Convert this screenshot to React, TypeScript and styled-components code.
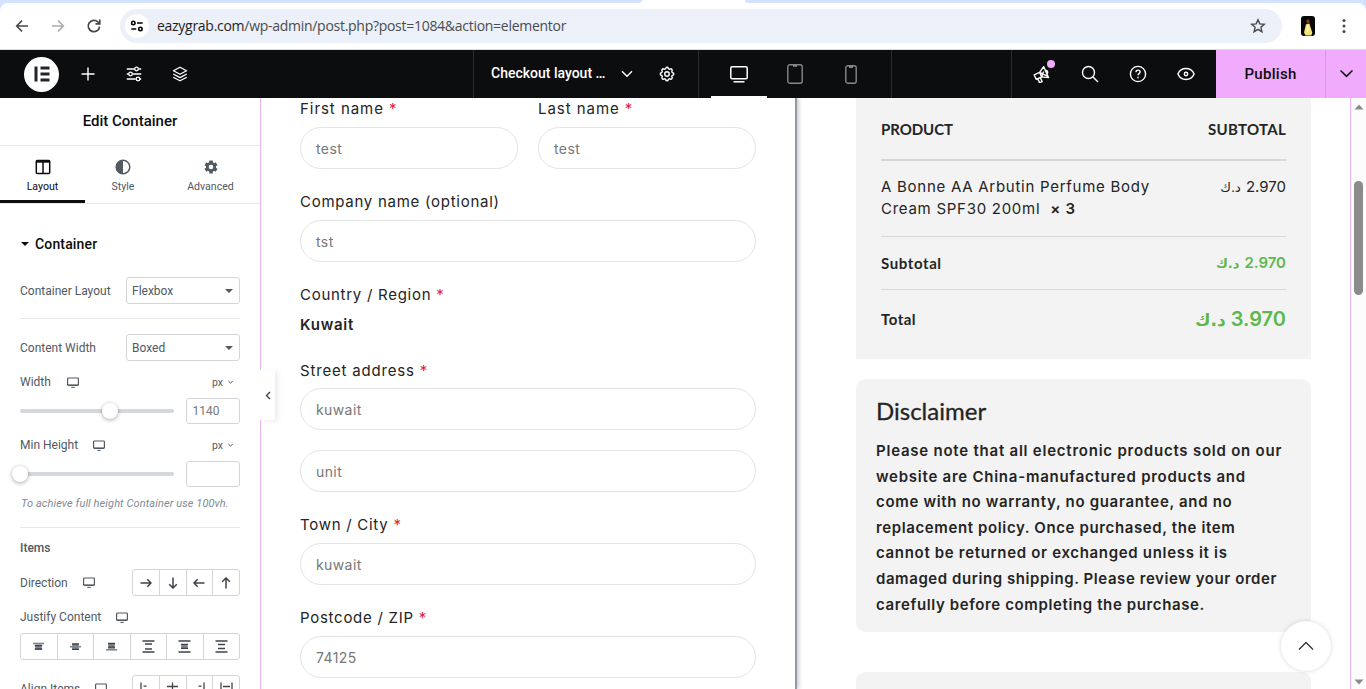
import React from "react";
import styled, { createGlobalStyle, css } from "styled-components";

const GlobalStyle = createGlobalStyle`
  *, *::before, *::after { box-sizing: border-box; }
  body { margin: 0; font-family: Roboto, "Liberation Sans", sans-serif; background: #fff; }
  svg { display: block; flex: none; }
`;

const Screen = styled.div`
  width: 100%;
  height: 689px;
  display: flex;
  flex-direction: column;
  overflow: hidden;
`;

/* ---------- browser chrome ---------- */

const TabStrip = styled.div`
  height: 3px;
  flex: none;
  display: flex;
  justify-content: space-between;
  background: #fff;
`;

const StripSegment = styled.div<{ $width: number; $side: "left" | "right" }>`
  width: ${p => p.$width}px;
  background: #d3e3fd;
  border-radius: ${p => (p.$side === "left" ? "0 0 8px 0" : "0 0 0 8px")};
`;

const BrowserBarBack = styled.div`
  flex: none;
  background: linear-gradient(#d3e3fd 10px, #fff 10px);
`;

const BrowserBar = styled.div`
  height: 47px;
  display: flex;
  align-items: center;
  padding: 0 14px 1px;
  background: #fff;
  border-radius: 8px 8px 0 0;
  border-bottom: 1px solid #dcdddc;
`;

const NavIcon = styled.div<{ $dim?: boolean }>`
  width: 16px;
  margin-right: 20px;
  color: ${p => (p.$dim ? "#a9aaab" : "#46484a")};
`;

const AddressBar = styled.div`
  flex: 1;
  height: 34px;
  margin-left: -2px;
  padding: 0 16px 0 5px;
  display: flex;
  align-items: center;
  border-radius: 17px;
  background: #ecf0f9;
`;

const SiteInfo = styled.div`
  width: 24px;
  height: 24px;
  margin-right: 8px;
  border-radius: 50%;
  background: #fff;
  display: grid;
  place-items: center;
`;

const Url = styled.div`
  flex: 1;
  font: 14px "Open Sans", "Noto Sans", sans-serif;
  letter-spacing: -0.28px;
  color: #4a4c50;
  white-space: nowrap;
`;

const UrlHost = styled.span`
  color: #1f1f1f;
`;

const ProfileSlot = styled.div`
  margin: 0 21px 0 19px;
`;

/* ---------- editor top bar ---------- */

const TopBar = styled.header`
  height: 48px;
  flex: none;
  display: flex;
  background: #0c0d0e;
  color: #fff;
`;

const BarGroup = styled.div<{ $width?: number; $divided?: boolean; $pad?: string }>`
  display: flex;
  align-items: center;
  ${p => (p.$width ? css`width: ${p.$width}px; flex: none;` : css`flex: 1;`)}
  padding: ${p => p.$pad || "0"};
  ${p => p.$divided && css`border-left: 1px solid #2a2c2e;`}
`;

const Logo = styled.div`
  width: 35px;
  height: 35px;
  margin-right: 6px;
  border-radius: 50%;
  background: #fff;
  display: grid;
  place-items: center;
`;

const BarButton = styled.div<{ $size?: number; $dim?: boolean }>`
  position: relative;
  width: ${p => p.$size || 46}px;
  height: 48px;
  display: grid;
  place-items: center;
  color: ${p => (p.$dim ? "#85878a" : "#fff")};
`;

const DeviceButton = styled(BarButton)<{ $active?: boolean }>`
  border-bottom: 2px solid ${p => (p.$active ? "#fff" : "transparent")};
  padding-top: 2px;
`;

const Notice = styled.span`
  position: absolute;
  left: 29px;
  top: 10px;
  width: 8px;
  height: 8px;
  border-radius: 50%;
  background: #f0abfc;
`;

const DocumentTitle = styled.div`
  width: 127px;
  font-weight: 500;
  font-size: 14px;
  line-height: 20px;
  padding-bottom: 2px;
  white-space: nowrap;
`;

const Publish = styled.div`
  width: 109px;
  display: grid;
  place-items: center;
  background: #f0abfc;
  color: #0c0d0e;
  font-weight: 500;
  font-size: 15px;
  letter-spacing: 0.3px;
`;

const PublishMore = styled.div`
  width: 41px;
  display: grid;
  place-items: center;
  background: #f0abfc;
  border-left: 1px solid #e48df5;
  color: #0c0d0e;
`;

/* ---------- side panel ---------- */

const Workspace = styled.div`
  flex: 1;
  min-height: 0;
  display: flex;
  position: relative;
`;

const Panel = styled.aside`
  width: 260px;
  flex: none;
  overflow: hidden;
  background: #fff;
  color: #515962;
  font-size: 12px;
`;

const PanelTitle = styled.div`
  height: 48px;
  padding-bottom: 1px;
  border-bottom: 1px solid #e6e8ea;
  display: grid;
  place-items: center;
  font-weight: 500;
  font-size: 15px;
  color: #0c0d0e;
`;

const Tabs = styled.div`
  height: 58px;
  display: flex;
  border-bottom: 1px solid #e6e8ea;
`;

const Tab = styled.div<{ $width: number; $active?: boolean }>`
  width: ${p => p.$width}px;
  height: 57px;
  padding-top: 13px;
  display: flex;
  flex-direction: column;
  align-items: center;
  gap: 4px;
  font-size: 10.6px;
  line-height: 15px;
  color: ${p => (p.$active ? "#0c0d0e" : "#515962")};
  border-bottom: 3px solid ${p => (p.$active ? "#0c0d0e" : "transparent")};
`;

const Controls = styled.div`
  padding: 0 20px;
`;

const SectionTitle = styled.div`
  height: 73px;
  padding: 6px 0 0 1px;
  display: flex;
  align-items: center;
  gap: 6px;
  font-weight: 500;
  font-size: 14px;
  letter-spacing: 0.15px;
  color: #0c0d0e;
`;

const Field = styled.div<{ $height: number; $top?: number }>`
  height: ${p => p.$height}px;
  margin-top: ${p => p.$top || 0}px;
  display: flex;
  align-items: center;
`;

const Label = styled.span<{ $gap?: number }>`
  margin-right: ${p => p.$gap || 0}px;
  white-space: nowrap;
`;

const Spacer = styled.span`
  flex: 1;
`;

const Select = styled.div`
  width: 114px;
  height: 27px;
  margin-left: auto;
  padding: 0 6px 0 5px;
  display: flex;
  align-items: center;
  justify-content: space-between;
  border: 1px solid #d2d6da;
  border-radius: 3px;
`;

const Separator = styled.div<{ $top: number }>`
  height: 1px;
  margin-top: ${p => p.$top}px;
  background: #e6e8ea;
`;

const Unit = styled.span`
  display: flex;
  align-items: center;
  gap: 5px;
  padding-right: 7px;
  font-size: 10.5px;
`;

const Track = styled.div`
  position: relative;
  width: 154px;
  height: 4px;
  border-radius: 3px;
  background: #d5d8dc;
`;

const Thumb = styled.span<{ $at: number }>`
  position: absolute;
  top: -6px;
  left: ${p => p.$at - 8}px;
  width: 16px;
  height: 16px;
  border-radius: 50%;
  background: #fff;
  box-shadow: 0 1px 4px rgba(0, 0, 0, 0.35);
`;

const NumberBox = styled.div`
  width: 54px;
  height: 26px;
  margin-left: auto;
  padding-left: 5.5px;
  display: flex;
  align-items: center;
  border: 1px solid #d2d6da;
  border-radius: 3px;
  color: #777;
`;

const Hint = styled.div`
  margin-top: 9px;
  padding-left: 1px;
  font-style: italic;
  font-size: 11px;
  line-height: 16px;
  letter-spacing: 0.1px;
  color: #818a96;
  white-space: nowrap;
`;

const Subheading = styled.div`
  margin-top: 12px;
  font-weight: 500;
  line-height: 16px;
`;

const Choices = styled.div<{ $full?: boolean }>`
  width: ${p => (p.$full ? "100%" : "108px")};
  height: 27px;
  margin-left: auto;
  display: flex;
  border: 1px solid #d2d6da;
  border-radius: 3px;
`;

const Choice = styled.div`
  flex: 1;
  display: grid;
  place-items: center;
  color: #3f444b;
  & + & { border-left: 1px solid #d2d6da; }
`;

const CollapseHandle = styled.div`
  position: absolute;
  z-index: 2;
  left: 260px;
  top: 272px;
  width: 15px;
  height: 50px;
  display: grid;
  place-items: center;
  background: #fff;
  border-radius: 0 3px 3px 0;
  box-shadow: 3px 1px 5px rgba(0, 0, 0, 0.08);
  color: #3f444b;
`;

/* ---------- page preview ---------- */

const Preview = styled.main`
  flex: 1;
  min-width: 0;
  display: flex;
  overflow: hidden;
  border-left: 1px solid #eeb4f4;
  border-right: 1px solid #f0b6f6;
  font-family: Inter, "Noto Sans", sans-serif;
  font-size: 15px;
  letter-spacing: 0.73px;
  color: #242424;
`;

const BillingColumn = styled.section`
  width: 536px;
  flex: none;
  padding: 0 39px;
  border-right: 2px solid #8f9aa8;
  box-shadow: 2px 0 4px rgba(0, 0, 0, 0.2);
  background: #fff;
`;

const NameRow = styled.div`
  display: grid;
  grid-template-columns: 1fr 1fr;
  gap: 20px;
`;

const FormField = styled.div<{ $top?: number }>`
  padding-top: ${p => p.$top || 0}px;
`;

const FormLabel = styled.div<{ $ls?: number }>`
  height: 22px;
  line-height: 22px;
  letter-spacing: ${p => p.$ls || 0.73}px;
  white-space: nowrap;
`;

const Required = styled.span`
  color: #e2223a;
`;

const TextInput = styled.div<{ $top?: number }>`
  height: 42px;
  margin-top: ${p => p.$top ?? 7}px;
  padding: 0 15px;
  display: flex;
  align-items: center;
  border: 1px solid #e4e4e4;
  border-radius: 21px;
  font-size: 14px;
  letter-spacing: 0.4px;
  color: #777;
`;

const Country = styled.div`
  margin-top: 8px;
  line-height: 22px;
  font-weight: 600;
`;

const SummaryColumn = styled.section`
  flex: 1;
  padding: 0 39px 0 59px;
`;

const OrderBox = styled.div`
  height: 261px;
  padding: 0 25px;
  background: #f3f3f3;
`;

const OrderRow = styled.div<{ $height: number; $line?: number; $lead?: boolean }>`
  height: ${p => p.$height}px;
  display: flex;
  justify-content: space-between;
  align-items: ${p => (p.$lead ? "flex-start" : "center")};
  padding-top: ${p => (p.$lead ? 15 : 0)}px;
  border-bottom: ${p => p.$line || 0}px solid #d8d8d8;
`;

const OrderHead = styled.span<{ $ls: number }>`
  font-family: Lato, sans-serif;
  font-weight: 700;
  font-size: 15px;
  letter-spacing: ${p => p.$ls}px;
`;

const ProductName = styled.div`
  line-height: 22px;
  white-space: nowrap;
`;

const Quantity = styled.strong`
  margin-left: 5px;
  font-weight: 600;
`;

const Price = styled.span<{ $tone?: "plain" | "sale"; $size?: number }>`
  display: flex;
  align-items: baseline;
  gap: 5px;
  line-height: 22px;
  font-size: ${p => p.$size || 15}px;
  letter-spacing: 0;
  ${p => p.$tone === "sale" && css`color: #5db84b; font-weight: 600;`}
`;

const Currency = styled.bdi<{ $size: number }>`
  font-family: "DejaVu Sans", sans-serif;
  font-size: ${p => p.$size}px;
`;

const Disclaimer = styled.div`
  height: 253px;
  margin-top: 20px;
  padding: 16px 20px;
  border-radius: 9px;
  background: #f3f3f3;
`;

const DisclaimerTitle = styled.h3`
  margin: 0 0 11px;
  font: 400 24px/32px Lato, sans-serif;
  letter-spacing: 0;
  -webkit-text-stroke: 0.3px #242424;
`;

const DisclaimerLine = styled.div<{ $ls: number }>`
  line-height: 25.6px;
  font-weight: 600;
  letter-spacing: ${p => p.$ls}px;
  white-space: nowrap;
`;

const NextBox = styled.div`
  height: 40px;
  margin-top: 40px;
  border-radius: 9px;
  background: #f3f3f3;
`;

const BackToTop = styled.div`
  position: absolute;
  left: 1281px;
  top: 523px;
  width: 50px;
  height: 50px;
  border-radius: 50%;
  display: grid;
  place-items: center;
  background: #fff;
  box-shadow: 0 0 4px rgba(0, 0, 0, 0.17);
  color: #333;
`;

const Scrollbar = styled.div`
  width: 15px;
  flex: none;
  display: flex;
  flex-direction: column;
  align-items: center;
  justify-content: space-between;
  padding: 6px 0 4px;
  background: #fcfcfc;
`;

const ScrollThumb = styled.div`
  width: 9px;
  height: 114px;
  margin-bottom: 313px;
  border-radius: 5px;
  background: #8b8b8b;
`;

/* ---------- icons ---------- */

type IconProps = { children: React.ReactNode; w?: number; h?: number; box?: string; sw?: number };
const Icon = ({ children, w = 16, h = w, box, sw = 1.5 }: IconProps) => (
  <svg width={w} height={h} viewBox={box || `0 0 ${w} ${h}`} fill="none" stroke="currentColor" strokeWidth={sw}>
    {children}
  </svg>
);

const MiniMonitor = () => (
  <Icon w={12} h={11} sw={1.2}>
    <rect x="0.6" y="1" width="10.8" height="7.4" rx="0.8" />
    <path d="M1 8.2h10" strokeWidth="1.4" />
    <path d="M4.3 10.4h3.4" strokeWidth="1" />
  </Icon>
);

const Caret = ({ w = 8 }: { w?: number }) => (
  <svg width={w} height={w / 2} viewBox="0 0 8 4" fill="currentColor"><path d="M0 0h8L4 4z" /></svg>
);

const Chevron = ({ w = 12, sw = 1.5 }: { w?: number; sw?: number }) => (
  <Icon w={w} h={w / 2 + 2} box="0 0 12 8" sw={sw}><path d="M1 1.2l5 5 5-5" /></Icon>
);

const arrowAngles = [0, 90, 180, 270];
const Arrow = ({ angle }: { angle: number }) => (
  <Icon w={12} sw={1.5}>
    <path d="M.5 6h10.5M7.3 2.2L11 6 7.3 9.8" transform={`rotate(${angle} 6 6)`} />
  </Icon>
);

const Lines = ({ kind }: { kind: number }) => {
  const light = { stroke: "#80858c", strokeWidth: 1.6 };
  return (
    <Icon w={13} h={13} sw={1.3}>
      {kind === 0 && <><path d="M1 3.5h11" {...light} /><rect x="3.2" y="4.5" width="6.6" height="5.5" fill="#80858c" stroke="none" /><path d="M2.8 5.6h7.4M2.8 9h7.4" /></>}
      {kind === 1 && <><path d="M1 6.7h11" {...light} /><rect x="3.2" y="4" width="6.6" height="5.5" fill="#80858c" stroke="none" /><path d="M3 4h7M3 9.3h7" /></>}
      {kind === 2 && <><path d="M1 9.8h11" {...light} /><rect x="3.2" y="3.3" width="6.6" height="5.5" fill="#80858c" stroke="none" /><path d="M3 3.5h7M3 7.2h7" /></>}
      {kind > 2 && <path d="M.5 1h12M.5 12h12" />}
      {kind === 3 && <path d="M3 4h7M3 9h7" strokeWidth="1.5" />}
      {kind === 4 && <><rect x="3.2" y="4" width="6.6" height="5" fill="#80858c" stroke="none" /><path d="M3 4.4h7M3 8.4h7" /></>}
      {kind === 5 && <path d="M3 4.5h7M3 8.5h7" />}
    </Icon>
  );
};

const alignPaths = [
  "M2 .5v12M4.5 4.2h3M4.5 8.5h5",
  "M6.5 .5v12M1 4.5h11M3 8.5h7",
  "M11 .5v12M5.5 4.2h3M3.5 8.5h5",
  "M1 .5v12M12 .5v12M3 4.5h7M3 8.5h7",
];

/* ---------- content ---------- */

const disclaimerLines: [string, number][] = [
  ["Please note that all electronic products sold on our", 0.77],
  ["website are China-manufactured products and", 0.75],
  ["come with no warranty, no guarantee, and no", 0.68],
  ["replacement policy. Once purchased, the item", 0.62],
  ["cannot be returned or exchanged unless it is", 0.68],
  ["damaged during shipping. Please review your order", 0.575],
  ["carefully before completing the purchase.", 0.62],
];

const Billing = () => (
  <BillingColumn>
    <NameRow>
      <FormField><FormLabel $ls={0.95}>First name <Required>*</Required></FormLabel><TextInput>test</TextInput></FormField>
      <FormField><FormLabel $ls={0.95}>Last name <Required>*</Required></FormLabel><TextInput>test</TextInput></FormField>
    </NameRow>
    <FormField $top={22}><FormLabel>Company name (optional)</FormLabel><TextInput>tst</TextInput></FormField>
    <FormField $top={22}>
      <FormLabel>Country / Region <Required>*</Required></FormLabel>
      <Country>Kuwait</Country>
    </FormField>
    <FormField $top={24}>
      <FormLabel $ls={0.82}>Street address <Required>*</Required></FormLabel>
      <TextInput $top={6}>kuwait</TextInput>
      <TextInput $top={20}>unit</TextInput>
    </FormField>
    <FormField $top={22}><FormLabel>Town / City <Required>*</Required></FormLabel><TextInput>kuwait</TextInput></FormField>
    <FormField $top={22}><FormLabel>Postcode / ZIP <Required>*</Required></FormLabel><TextInput>74125</TextInput></FormField>
  </BillingColumn>
);

const Money = ({ amount, size, cur, sale }: { amount: string; size?: number; cur: number; sale?: boolean }) => (
  <Price $size={size} $tone={sale ? "sale" : "plain"}>
    <Currency $size={cur}>د.ك</Currency><span>{amount}</span>
  </Price>
);

const Summary = () => (
  <SummaryColumn>
    <OrderBox>
      <OrderRow $height={63} $line={2}><OrderHead $ls={-0.05}>PRODUCT</OrderHead><OrderHead $ls={0.3}>SUBTOTAL</OrderHead></OrderRow>
      <OrderRow $height={76} $line={1} $lead>
        <ProductName>A Bonne AA Arbutin Perfume Body<br />Cream SPF30 200ml&nbsp;<Quantity>× 3</Quantity></ProductName>
        <Money amount="2.970" cur={13} />
      </OrderRow>
      <OrderRow $height={53} $line={1}><OrderHead $ls={0.6}>Subtotal</OrderHead><Money amount="2.970" cur={13} sale /></OrderRow>
      <OrderRow $height={58}><OrderHead $ls={0.5}>Total</OrderHead><Money amount="3.970" size={20} cur={17} sale /></OrderRow>
    </OrderBox>
    <Disclaimer>
      <DisclaimerTitle>Disclaimer</DisclaimerTitle>
      {disclaimerLines.map(([text, ls]) => <DisclaimerLine key={text} $ls={ls}>{text}</DisclaimerLine>)}
    </Disclaimer>
    <NextBox />
  </SummaryColumn>
);

const Sidebar = () => (
  <Panel>
    <PanelTitle>Edit Container</PanelTitle>
    <Tabs>
      <Tab $width={85} $active>
        <Icon w={16}><rect x="1.3" y="1.6" width="13.4" height="12.8" rx="1" /><path d="M8 2v12" /><path d="M1 2.4h14" strokeWidth="2.6" /></Icon>
        Layout
      </Tab>
      <Tab $width={76}>
        <Icon w={16}><circle cx="8" cy="8" r="6.8" /><path d="M8 1a7 7 0 000 14z" fill="currentColor" stroke="none" /></Icon>
        Style
      </Tab>
      <Tab $width={99}>
        <Icon w={16}>
          <path d="M8 1.5v13M2.4 4.75l11.2 6.5M2.4 11.25l11.2-6.5" strokeWidth="3.6" />
          <circle cx="8" cy="8" r="3.6" strokeWidth="3" />
          <circle cx="8" cy="8" r="2.3" fill="#fff" stroke="none" />
        </Icon>
        Advanced
      </Tab>
    </Tabs>
    <Controls>
      <SectionTitle><Caret />Container</SectionTitle>
      <Field $height={27}><Label>Container Layout</Label><Select>Flexbox<Caret /></Select></Field>
      <Separator $top={14} />
      <Field $height={27} $top={15}><Label>Content Width</Label><Select>Boxed<Caret /></Select></Field>
      <Field $height={20} $top={11}><Label $gap={16}>Width</Label><MiniMonitor /><Spacer /><Unit>px<Chevron w={5} sw={2.4} /></Unit></Field>
      <Field $height={26} $top={6}><Track><Thumb $at={89.5} /></Track><NumberBox>1140</NumberBox></Field>
      <Field $height={20} $top={11}><Label $gap={15}>Min Height</Label><MiniMonitor /><Spacer /><Unit>px<Chevron w={5} sw={2.4} /></Unit></Field>
      <Field $height={26} $top={6}><Track><Thumb $at={0} /></Track><NumberBox /></Field>
      <Hint>To achieve full height Container use 100vh.</Hint>
      <Separator $top={15} />
      <Subheading>Items</Subheading>
      <Field $height={27} $top={13}>
        <Label $gap={15}>Direction</Label><MiniMonitor />
        <Choices>{arrowAngles.map(a => <Choice key={a}><Arrow angle={a} /></Choice>)}</Choices>
      </Field>
      <Field $height={20} $top={11}><Label $gap={15}>Justify Content</Label><MiniMonitor /></Field>
      <Field $height={27} $top={6}>
        <Choices $full>{[0, 1, 2, 3, 4, 5].map(k => <Choice key={k}><Lines kind={k} /></Choice>)}</Choices>
      </Field>
      <Field $height={27} $top={15}>
        <Label $gap={15}>Align Items</Label><MiniMonitor />
        <Choices>{alignPaths.map(d => <Choice key={d}><Icon w={13} sw={1.3}><path d={d} /></Icon></Choice>)}</Choices>
      </Field>
    </Controls>
  </Panel>
);

const Browser = () => (
  <>
    <TabStrip><StripSegment $width={642} $side="left" /><StripSegment $width={621} $side="right" /></TabStrip>
    <BrowserBarBack>
      <BrowserBar>
        <NavIcon><Icon><path d="M14 8H3M8 2.6L2.6 8 8 13.4" /></Icon></NavIcon>
        <NavIcon $dim><Icon><path d="M2 8h11M8 2.6L13.4 8 8 13.4" /></Icon></NavIcon>
        <NavIcon><Icon sw={1.7}><path d="M13.6 8.6A5.7 5.7 0 1112 4l1.7 1.7M13.8 1.6v4.3H9.5" /></Icon></NavIcon>
        <AddressBar>
          <SiteInfo>
            <Icon w={14} h={14} sw={1.6}><circle cx="3.3" cy="4" r="1.7" /><path d="M7 4h5.7M1.3 10h5" /><circle cx="10.4" cy="10" r="1.7" /></Icon>
          </SiteInfo>
          <Url><UrlHost>eazygrab.com</UrlHost>/wp-admin/post.php?post=1084&amp;action=elementor</Url>
          <Icon w={16} sw={1.4}><path d="M8 1.8l1.8 4.1 4.5.4-3.4 3 1 4.4L8 11.4l-3.9 2.3 1-4.4-3.4-3 4.5-.4z" stroke="#46484a" /></Icon>
        </AddressBar>
        <ProfileSlot>
          <svg width="14" height="20" viewBox="0 0 14 20">
            <rect width="14" height="20" rx="3" fill="#080606" />
            <ellipse cx="7" cy="5.6" rx="1.7" ry="2.4" fill="#7d3b1e" />
            <path d="M5 8.2l3.5-.4 1.2 4 1.6 5-1 2.8H4.5L3 16.500z" fill="#f3e17c" />
            <path d="M5.500 9l2 .5.500 4-2 3z" fill="#fff3a8" />
          </svg>
        </ProfileSlot>
        <svg width="16" height="16" fill="#46484a"><circle cx="8" cy="2.600" r="1.500" /><circle cx="8" cy="8" r="1.500" /><circle cx="8" cy="13.400" r="1.500" /></svg>
      </BrowserBar>
    </BrowserBarBack>
  </>
);

const EditorBar = () => (
  <TopBar>
    <BarGroup $width={473} $pad="0 0 0 24px">
      <Logo>
        <svg width="16" height="16" viewBox="0 0 16 16" fill="#222427"><path d="M.5 .5h3v15h-3zM6.500 .5h9v3h-9zM6.500 6.500h9v3h-9zM6.500 12.500h9v3h-9z" /></svg>
      </Logo>
      <BarButton><Icon w={14} sw={1.4}><path d="M7 .5v13M.5 7h13" /></Icon></BarButton>
      <BarButton>
        <Icon w={16} sw={1.3}>
          <path d="M.8 3h7.700M12.500 3h2.700M.8 8h1.700M6.500 8h8.700M.8 13h9M14 13h1.200" />
          <circle cx="10.500" cy="3" r="1.800" /><circle cx="4.500" cy="8" r="1.800" /><circle cx="12" cy="13" r="1.800" />
        </Icon>
      </BarButton>
      <BarButton>
        <Icon w={16} sw={1.3}><path d="M8 1.200l6.600 3.500L8 8.200 1.400 4.700zM1.200 8L8 11.600 14.800 8M1.200 11.200L8 14.800l6.800-3.600" strokeLinejoin="round" /></Icon>
      </BarButton>
    </BarGroup>
    <BarGroup $width={225} $divided $pad="0 0 0 17px">
      <DocumentTitle>Checkout layout …</DocumentTitle>
      <BarButton $size={20}><Chevron w={12} sw={1.400} /></BarButton>
      <BarButton $size={62}>
        <Icon w={18} sw={1.300} box="0 0 24 24">
          <g strokeWidth="1.900">
            <path d="M10.300 4.300c.4-1.700 2.900-1.700 3.400 0a1.700 1.700 0 002.600 1.100c1.500-.9 3.300.8 2.400 2.400a1.700 1.700 0 001 2.500c1.800.4 1.800 2.900 0 3.400a1.700 1.700 0 00-1 2.600c.9 1.500-.9 3.300-2.400 2.400a1.700 1.700 0 00-2.600 1c-.4 1.800-2.900 1.800-3.400 0a1.700 1.700 0 00-2.500-1c-1.600.9-3.300-.9-2.400-2.400a1.700 1.700 0 00-1.100-2.600c-1.700-.4-1.700-2.900 0-3.400a1.700 1.700 0 001.100-2.500c-.9-1.600.8-3.300 2.400-2.400a1.700 1.700 0 002.500-1.100z" />
            <circle cx="12" cy="12" r="3" />
          </g>
        </Icon>
      </BarButton>
    </BarGroup>
    <BarGroup $width={193} $divided $pad="0 0 0 12px">
      <DeviceButton $size={56} $active>
        <Icon w={18} h={17} sw={1.500}><rect x="0.800" y="0.800" width="16.400" height="12" rx="1.300" /><path d="M3.500 15.800h11" /></Icon>
      </DeviceButton>
      <DeviceButton $size={56} $dim>
        <Icon w={16} h={20} sw={1.400}><rect x="0.800" y="0.800" width="14.400" height="18.400" rx="2" /><path d="M6 1.800h4" strokeWidth="2" /></Icon>
      </DeviceButton>
      <DeviceButton $size={56} $dim>
        <Icon w={12} h={19} sw={1.400}><rect x="0.800" y="0.800" width="10.400" height="17.400" rx="2" /><path d="M4 2h4" strokeWidth="2" /></Icon>
      </DeviceButton>
    </BarGroup>
    <BarGroup $divided />
    <BarGroup $width={205} $divided $pad="0 0 0 6px">
      <BarButton $size={48}>
        <Icon w={18} sw={1.400}>
          <g transform="rotate(-24 9 9)" strokeLinejoin="round">
            <path d="M1.500 6.500h6v5h-6zM7.500 6.500l6-3.500v12l-6-3.500M3.200 11.500v4.500h2.800v-4.500M13.500 7.300c2 .2 2 3.200 0 3.400M7.500 6.500l6 7M7.500 11.500l4-4" />
          </g>
        </Icon>
        <Notice />
      </BarButton>
      <BarButton $size={48}><Icon w={18} sw={1.400}><circle cx="7.500" cy="7.500" r="6" /><path d="M12 12l5 5" /></Icon></BarButton>
      <BarButton $size={48}>
        <Icon w={18} sw={1.400}><circle cx="9" cy="9" r="7.600" /><path d="M7 7.200c0-2.800 4.100-2.600 4.100-.2 0 1.600-2.100 1.600-2.100 3.200M9 11.800v1.500" /></Icon>
      </BarButton>
      <BarButton $size={48}>
        <Icon w={18} sw={1.400}><path d="M.9 9C4 1.700 14 1.700 17.100 9 14 16.300 4 16.300 .9 9z" /><circle cx="9" cy="9" r="1.700" /></Icon>
      </BarButton>
    </BarGroup>
    <Publish>Publish</Publish>
    <PublishMore><Chevron w={15} sw={1.300} /></PublishMore>
  </TopBar>
);

export default function App() {
  return (
    <>
      <GlobalStyle />
      <Screen>
        <Browser />
        <EditorBar />
        <Workspace>
          <Sidebar />
          <Preview>
            <Billing />
            <Summary />
          </Preview>
          <Scrollbar>
            <svg width="10" height="6" fill="#8b8b8b"><path d="M5 .5l4.500 5h-9z" /></svg>
            <ScrollThumb />
            <svg width="10" height="6" fill="#8b8b8b"><path d="M.5 .5h9L5 5.500z" /></svg>
          </Scrollbar>
          <CollapseHandle><Icon w={6} h={9} sw={1.400}><path d="M5 1L1.500 4.500 5 8" /></Icon></CollapseHandle>
          <BackToTop><Icon w={16} h={10} sw={1.300}><path d="M1 8.500l7-7 7 7" /></Icon></BackToTop>
        </Workspace>
      </Screen>
    </>
  );
}
